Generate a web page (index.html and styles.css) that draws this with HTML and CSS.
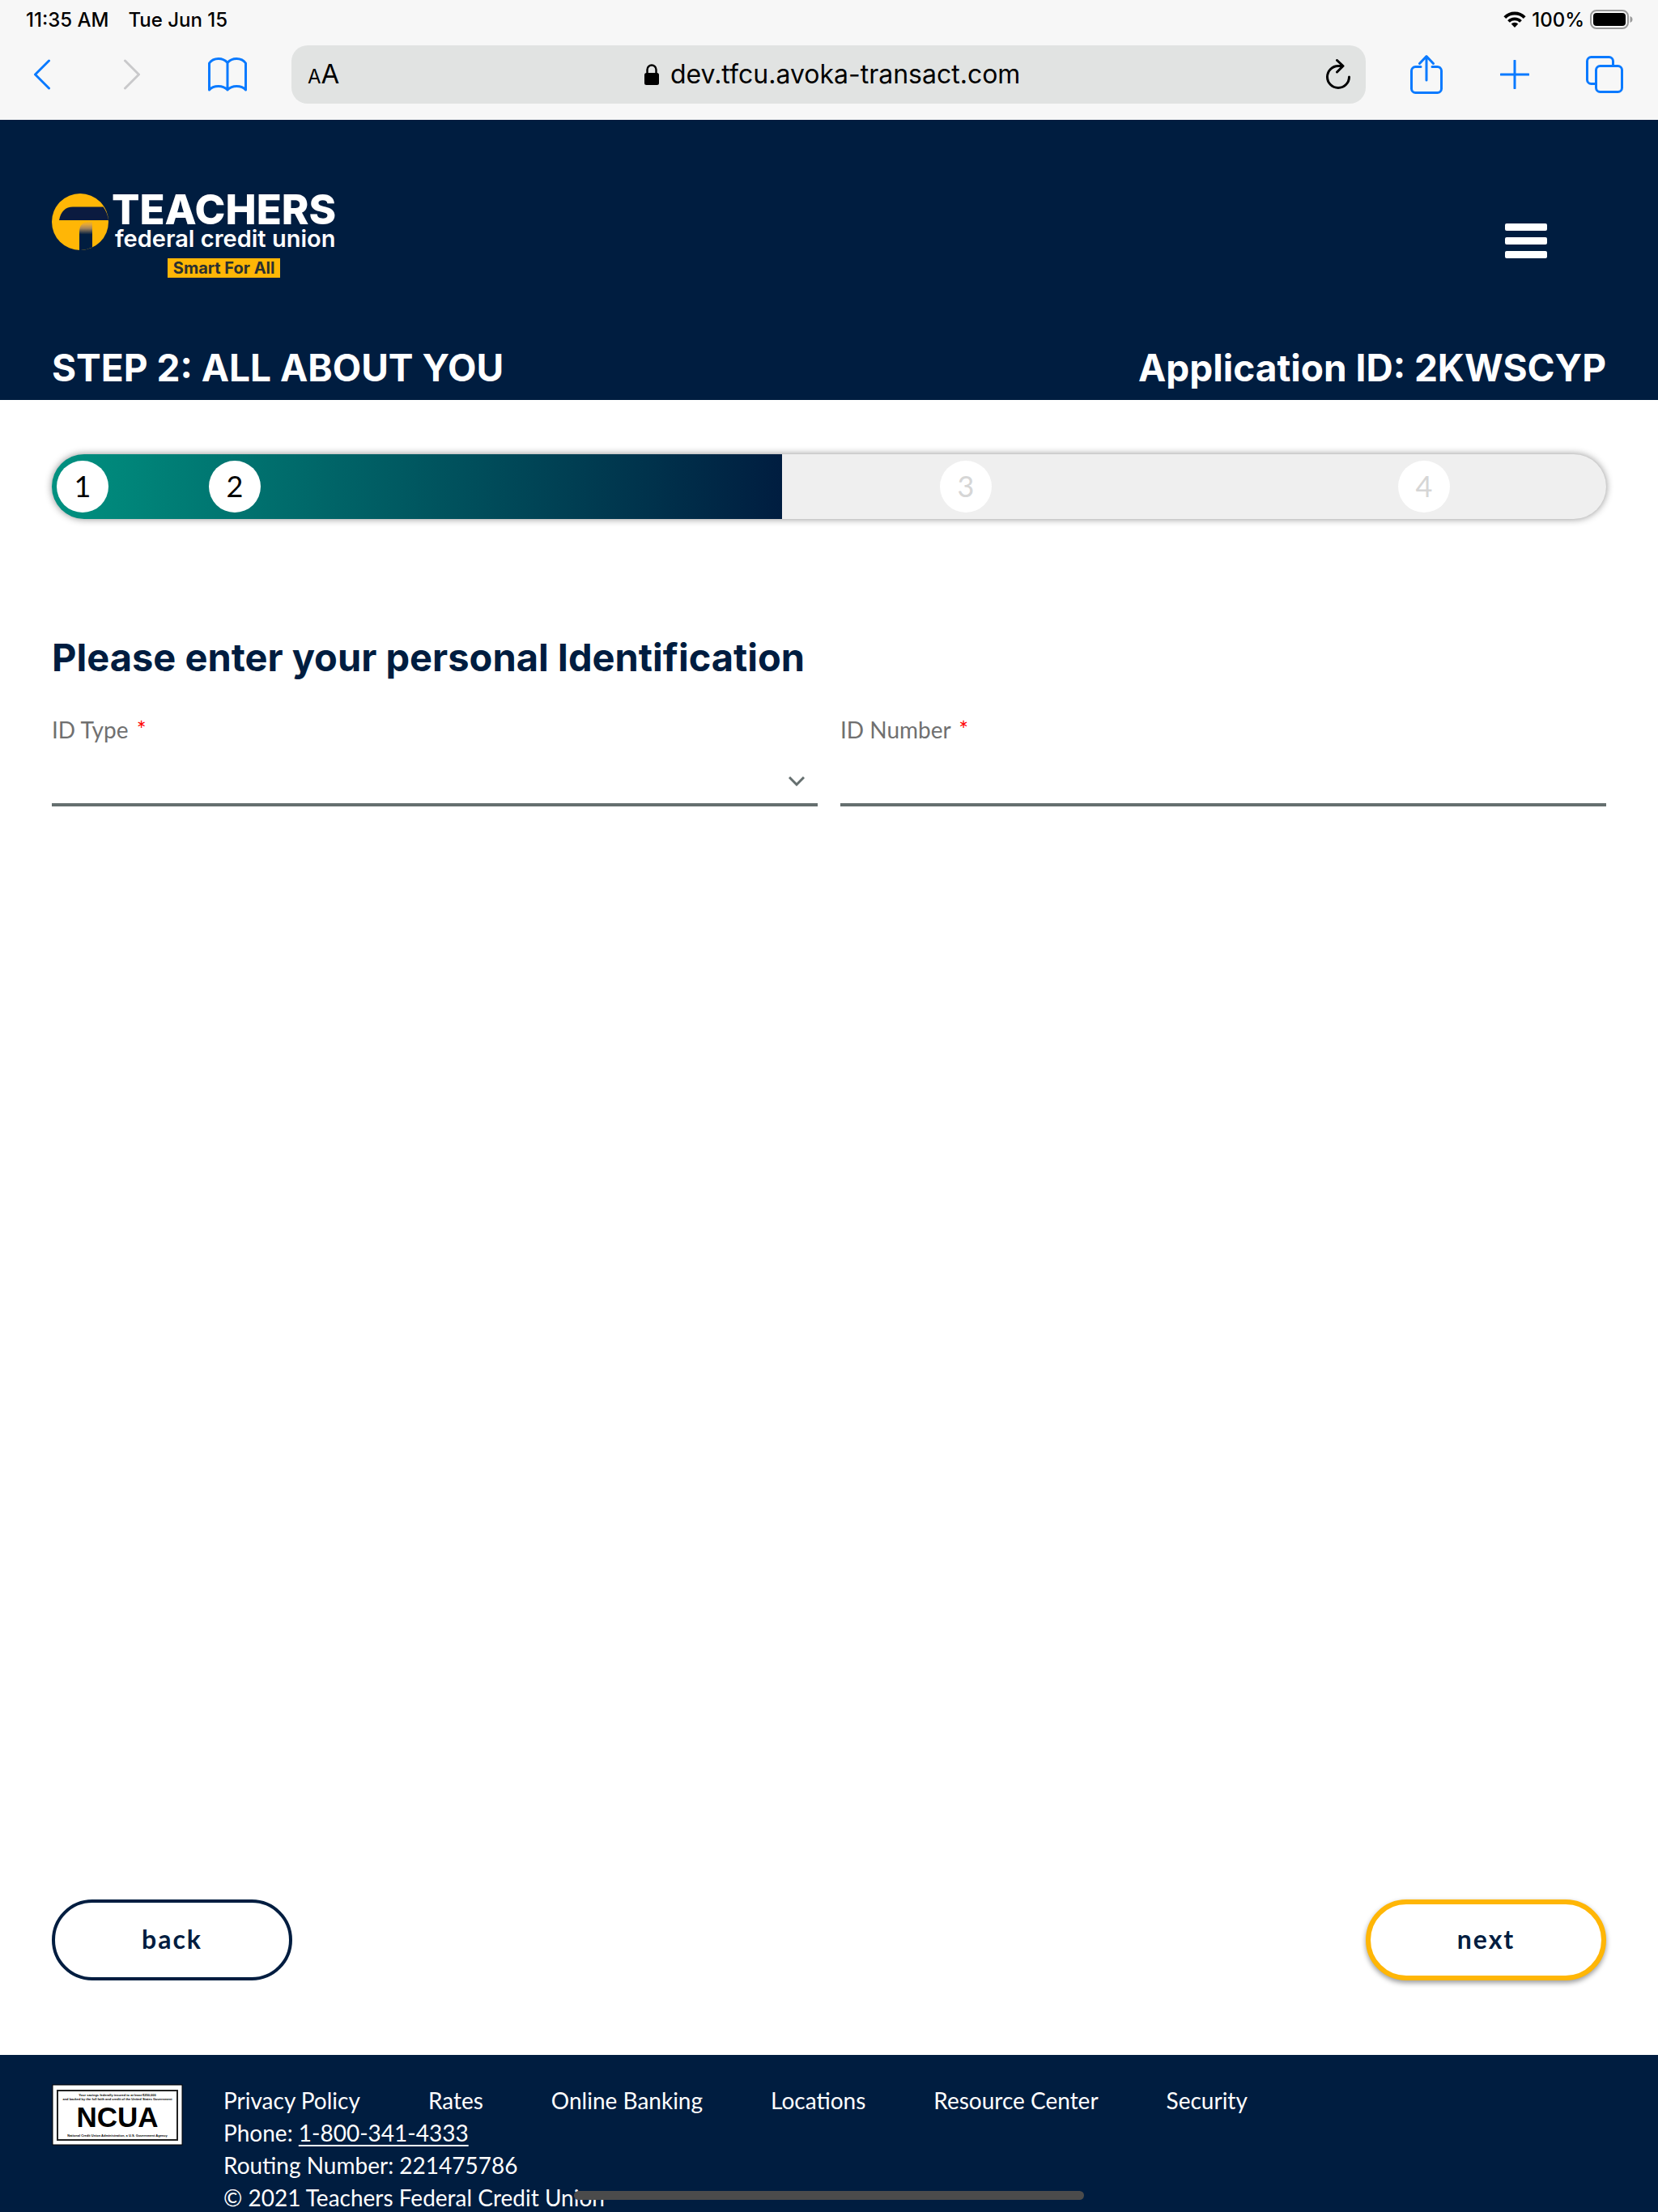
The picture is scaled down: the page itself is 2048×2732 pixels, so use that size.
FILE: index.html
```html
<!DOCTYPE html>
<html lang="en">
<head>
<meta charset="utf-8">
<meta name="viewport" content="width=device-width, initial-scale=1">
<title>Teachers Federal Credit Union - All About You</title>
<link rel="stylesheet" href="styles.css">
</head>
<body>
<div class="browser">
  <div class="status">
    <span class="status-time">11:35 AM</span>
    <span>Tue Jun 15</span>
    <span class="status-right">
      <svg class="wifi" viewBox="0 0 28 20" width="28" height="20" aria-hidden="true">
        <path d="M1.8 7.6a17.4 17.4 0 0 1 24.4 0" fill="none" stroke="#000" stroke-width="4"/>
        <path d="M6.5 12.5a10.8 10.8 0 0 1 15 0" fill="none" stroke="#000" stroke-width="3.8"/>
        <path d="M14 20l-4.300-4.400a6.200 6.200 0 0 1 8.600 0z"/>
      </svg>
      <span>100%</span>
      <svg class="battery" viewBox="0 0 54 24" width="54" height="24" aria-hidden="true">
        <rect x="1" y="1" width="46" height="22" rx="7" fill="none" stroke="#9a9a9a" stroke-width="2"/>
        <rect x="4" y="4" width="40" height="16" rx="4"/>
        <path d="M49.500 8c4 1.300 4 6.700 0 8z" fill="#9a9a9a"/>
      </svg>
    </span>
  </div>
  <div class="toolbar">
    <button class="tool tool-back" aria-label="Back"><svg viewBox="0 0 22 38" width="22" height="38"><path d="M19.500 2L2.500 19l17 17"/></svg></button>
    <button class="tool tool-forward" aria-label="Forward" disabled><svg viewBox="0 0 22 38" width="22" height="38"><path d="M2.500 2l17 17-17 17"/></svg></button>
    <button class="tool tool-book" aria-label="Bookmarks"><svg viewBox="0 0 48 42" width="48" height="42"><path d="M24 6.500C21 3 17 1.500 12.800 1.500 8 1.500 4 3.500 1.500 7v33C4 37 8 35.500 12.800 35.500S21 37 24 40c3-3 7-4.500 11.200-4.500S44 37 46.500 40V7C44 3.500 40 1.500 35.200 1.500 31 1.500 27 3 24 6.500zV40"/></svg></button>
    <div class="address">
      <button class="address-aa" aria-label="Page settings"><span class="aa-small">A</span>A</button>
      <a class="address-url" href="#"><svg viewBox="0 0 18 26" width="18" height="26" aria-hidden="true"><rect x="0" y="11" width="18" height="15" rx="2.500"/><path d="M3.500 12V7a5.500 5.500 0 0 1 11 0v5" fill="none" stroke="#000" stroke-width="2.400"/></svg>dev.tfcu.avoka-transact.com</a>
      <button class="address-reload" aria-label="Reload"><svg viewBox="0 0 32 38" width="32" height="38"><path d="M29.500 22A13.500 13.500 0 1 1 16 8.500h6M14.500 1.500l7.500 7-7.500 7.500"/></svg></button>
    </div>
    <button class="tool tool-share" aria-label="Share"><svg viewBox="0 0 40 50" width="40" height="50"><path d="M13 15.500H6.500a5 5 0 0 0-5 5v22a5 5 0 0 0 5 5h27a5 5 0 0 0 5-5v-22a5 5 0 0 0-5-5H27M20 32V3M11.500 11.500L20 2.500l8.500 9"/></svg></button>
    <button class="tool tool-plus" aria-label="New tab"><svg viewBox="0 0 36 36" width="36" height="36"><path d="M18 1v34M1 18h34"/></svg></button>
    <button class="tool tool-tabs" aria-label="Tabs"><svg viewBox="0 0 46 46" width="46" height="46"><rect x="12.500" y="12.500" width="32" height="32" rx="5"/><path d="M12 34.500H6.500a5 5 0 0 1-5-5v-23a5 5 0 0 1 5-5h22a5 5 0 0 1 5 5v5.500"/></svg></button>
  </div>
</div>

<header class="header">
  <div class="brand-row">
    <a class="brand" href="#" aria-label="Teachers federal credit union, Smart For All">
      <svg class="brand-mark" viewBox="0 0 70 70" width="70" height="70" aria-hidden="true">
        <defs><linearGradient id="fade" x1="0" y1="0" x2="0" y2="1"><stop offset="0" stop-color="#ffb606"/><stop offset=".12" stop-color="#e0a63c"/><stop offset=".25" stop-color="#a5855c"/><stop offset=".46" stop-color="#001d40"/></linearGradient></defs>
        <circle cx="35" cy="35" r="35" fill="#ffb606"/>
        <path d="M63.500 16.500H26C17 16.500 11 22 9 33h61a35 35 0 0 0-6.500-16.500z" fill="#0b1b40"/>
        <path d="M34 70V47c0-8 5-13 16-13v32.600A35 35 0 0 1 34 70z" fill="url(#fade)"/>
      </svg>
      <span class="brand-text">
        <span class="brand-name">TEACHERS</span>
        <span class="brand-sub">federal credit union</span>
        <span class="brand-tag">Smart For All</span>
      </span>
    </a>
    <button class="menu" aria-label="Menu"><span></span><span></span><span></span></button>
  </div>
  <div class="title-row">
    <h1 class="title">STEP 2: ALL ABOUT YOU</h1>
    <p class="title">Application ID: 2KWSCYP</p>
  </div>
</header>

<main class="main">
  <ol class="progress" aria-label="Progress">
    <li class="step">1</li>
    <li class="step" aria-current="step">2</li>
    <li class="step step-todo">3</li>
    <li class="step step-todo">4</li>
  </ol>
  <form class="form">
    <h2 class="heading">Please enter your personal Identification</h2>
    <div class="fields">
      <div class="field">
        <label class="label" for="id-type">ID Type <span class="required">*</span></label>
        <div class="select-wrap">
          <select class="control" id="id-type" required><option value=""></option><option>Passport</option></select>
          <svg class="caret" viewBox="0 0 20 12" width="20" height="12" aria-hidden="true"><path d="M1 1l9 9 9-9" fill="none" stroke="#656f6f" stroke-width="3"/></svg>
        </div>
      </div>
      <div class="field">
        <label class="label" for="id-number">ID Number <span class="required">*</span></label>
        <input class="control" id="id-number" type="text" required>
      </div>
    </div>
    <div class="actions">
      <button class="action" type="button">back</button>
      <button class="action action-next" type="submit">next</button>
    </div>
  </form>
</main>

<footer class="footer">
  <svg class="ncua" viewBox="0 0 162 76" width="162" height="76" role="img" aria-label="NCUA">
    <rect x="1" y="1" width="160" height="74" fill="#fff" stroke="#000"/>
    <rect x="7" y="8" width="148" height="61" fill="none" stroke="#222" stroke-width="2"/>
    <text class="ncua-small" x="81" y="15">Your savings federally insured to at least $250,000</text>
    <text class="ncua-small" x="81" y="20">and backed by the full faith and credit of the United States Government</text>
    <text class="ncua-big" x="81" y="53">NCUA</text>
    <text class="ncua-small" x="81" y="65">National Credit Union Administration, a U.S. Government Agency</text>
  </svg>
  <div class="footer-text">
    <nav class="footer-nav">
      <a href="#">Privacy Policy</a>
      <a href="#">Rates</a>
      <a href="#">Online Banking</a>
      <a href="#">Locations</a>
      <a href="#">Resource Center</a>
      <a href="#">Security</a>
    </nav>
    <p>Phone: <a class="phone" href="tel:18003414333">1-800-341-4333</a></p>
    <p>Routing Number: 221475786</p>
    <p>© 2021 Teachers Federal Credit Union</p>
  </div>
</footer>
<div class="home-indicator"></div>
</body>
</html>
```
FILE: styles.css
```css
* { box-sizing: border-box; }

body {
  margin: 0;
  height: 100vh;
  overflow: hidden;
  display: flex;
  flex-direction: column;
  background: #fff;
  font-family: Lato, "Open Sans", sans-serif;
  font-size: 28px;
}

button { margin: 0; padding: 0; border: 0; background: none; font: inherit; color: inherit; cursor: pointer; }
h1, h2, p, ol { margin: 0; padding: 0; }
svg { display: block; }

/* Browser chrome */
.browser { flex: none; background: #f7f7f7; color: #000; font-family: Inter, sans-serif; padding-bottom: 20px; }
.status { display: flex; align-items: center; height: 48px; padding: 0 30px 0 32px; gap: 24px; font-size: 24px; font-weight: 500; }
.status-right { margin-left: auto; display: flex; align-items: center; gap: 7px; }
.toolbar { display: flex; align-items: center; height: 72px; margin-top: 8px; padding: 0 43px 0 41px; }
.tool { flex: none; color: #0a7aff; }
.tool svg, .address-reload svg { fill: none; stroke: currentColor; stroke-width: 3; stroke-linecap: round; stroke-linejoin: round; }
.tool-forward { margin-left: 89px; color: #c9c9cb; }
.tool-book { margin: 0 55px 0 83px; }
.tool-share { margin: 0 71px 0 55px; }
.tool-tabs { margin-left: 70px; }
.address { flex: 1; display: flex; align-items: center; justify-content: space-between; height: 72px; padding: 0 18px 0 20px; border-radius: 20px; background: #e1e3e2; }
.address-aa { padding-top: 2px; font-size: 33px; line-height: 40px; }
.aa-small { font-size: 24px; }
.address-url { display: flex; align-items: center; gap: 14px; color: #000; text-decoration: none; font-size: 32px; line-height: 40px; }

/* Site header */
.header { flex: none; padding: 91px 64px 12px; background: #001d40; color: #fff; font-family: Inter, sans-serif; }
.brand-row { display: flex; justify-content: space-between; align-items: flex-start; height: 104px; }
.brand { display: flex; gap: 4px; color: #fff; text-decoration: none; }
.brand-text { display: flex; flex-direction: column; }
.brand-name { font-size: 51px; line-height: 40px; font-weight: 800; }
.brand-sub { padding-left: 4px; font-size: 29px; line-height: 32px; font-weight: 600; }
.brand-tag { align-self: center; margin-top: 8px; padding: 0 7px; background: #ffb606; color: #2b3030; font-size: 20px; line-height: 24px; font-weight: 700; }
.menu { display: grid; gap: 8px; width: 52px; margin: 37px 73px 0 0; }
.menu span { height: 9px; border-radius: 2px; background: #fff; }
.title-row { display: flex; justify-content: space-between; margin-top: 83px; }
.title { font-size: 46px; line-height: 56px; font-weight: 700; }

/* Progress */
.main { flex: 1; display: flex; flex-direction: column; padding: 67px 64px 92px; }
.progress {
  flex: none;
  display: grid;
  grid-template-columns: 188fr 903fr 566fr 257fr;
  align-items: center;
  height: 80px;
  padding-left: 6px;
  border-radius: 40px;
  background: linear-gradient(90deg, #009180, #001d40) 0 0 / 47% 100% no-repeat #efefef;
  box-shadow: 0 0 10px rgba(0, 0, 0, .45);
  list-style: none;
}
.step { width: 64px; height: 64px; border-radius: 50%; background: #fff; color: #000; font-size: 36px; line-height: 62px; text-align: center; }
.step-todo { color: #d6d6d6; }

/* Form */
.form { flex: 1; display: flex; flex-direction: column; margin-top: 143px; }
.heading { color: #001d40; font-family: Inter, sans-serif; font-size: 47px; line-height: 56px; font-weight: 700; }
.fields { display: grid; grid-template-columns: 1fr 1fr; gap: 28px; margin-top: 41px; }
.field { display: flex; flex-direction: column; }
.label { color: #707070; line-height: 40px; }
.required { color: #f00; padding-left: 3px; }
.select-wrap { display: grid; }
.control { width: 100%; height: 63px; margin: 0; padding: 0; border: 0; border-bottom: 4px solid #656f6f; border-radius: 0; background: transparent; color: #001d40; font: inherit; appearance: none; outline: none; grid-area: 1 / 1; }
.field > .control, .select-wrap { margin-top: 12px; }
.caret { grid-area: 1 / 1; align-self: center; justify-self: end; margin-right: 16px; pointer-events: none; }
.actions { display: flex; justify-content: space-between; margin-top: auto; }
.action { width: 297px; height: 100px; padding-bottom: 4px; border: 4px solid #001d40; border-radius: 50px; background: #fff; color: #001d40; font-size: 32px; font-weight: 700; letter-spacing: 2px; }
.action-next { border: 6px solid #ffb606; box-shadow: 0 3px 6px rgba(0, 0, 0, .4); }

/* Footer */
.footer { flex: none; display: flex; gap: 50px; padding: 36px 64px 0; height: 194px; background: #001d40; color: #fff; line-height: 40px; }
.footer a { color: #fff; }
.ncua { flex: none; }
.ncua text { font-family: "Liberation Sans", sans-serif; font-weight: 700; text-anchor: middle; }
.ncua-small { font-size: 4px; }
.ncua-big { font-size: 35px; }
.footer-nav { display: flex; gap: 84px; }
.footer-nav a { text-decoration: none; }
.phone { text-underline-offset: 4px; }

.home-indicator { position: fixed; left: 50%; bottom: 15px; width: 630px; height: 11px; margin-left: -315px; border-radius: 6px; background: #4b4b4b; }
```
